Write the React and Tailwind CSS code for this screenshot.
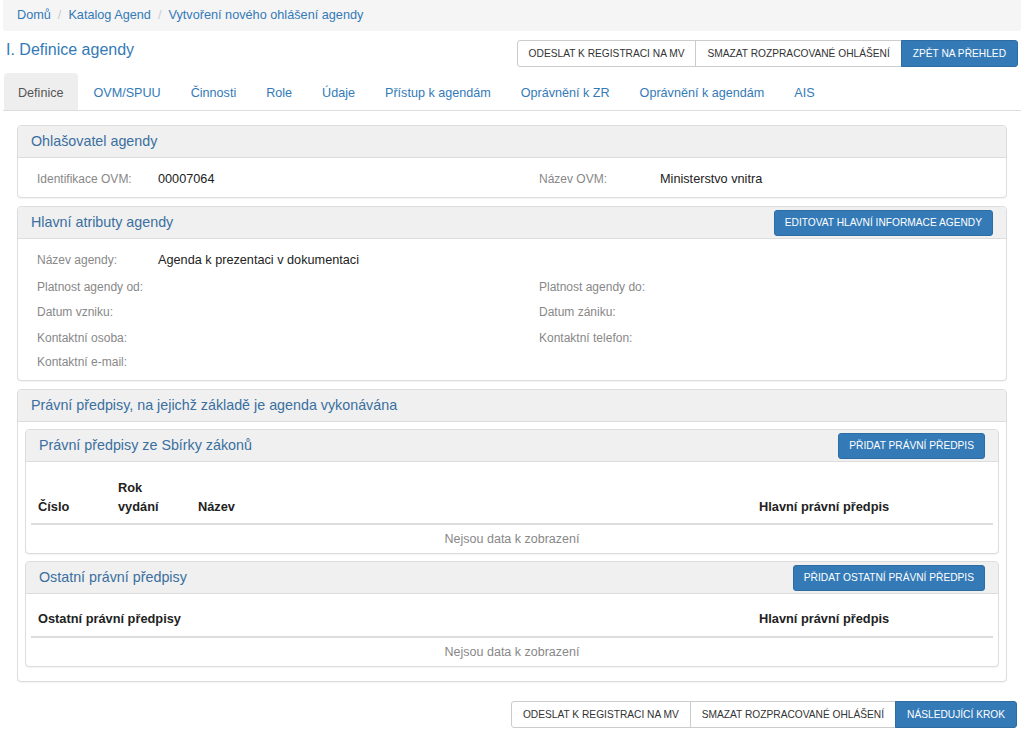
const LINK = 'text-[#337ab7]';

function Btn({ children, primary }) {
  return (
    <button
      className={
        primary
          ? 'h-[26px] px-[10px] text-[10.2px] uppercase border border-[#2e6da4] bg-[#337ab7] text-white rounded-[3px] whitespace-nowrap'
          : 'h-[26px] px-[10px] text-[10.2px] uppercase border border-[#ccc] bg-white text-[#333] rounded-[3px] whitespace-nowrap'
      }
    >
      {children}
    </button>
  );
}

function BtnGroup({ items }) {
  return (
    <div className="flex">
      {items.map((it, i) => (
        <button
          key={i}
          className={
            (it.primary
              ? 'border-[#2e6da4] bg-[#337ab7] text-white '
              : 'border-[#ccc] bg-white text-[#333] ') +
            'h-[27px] px-[11px] text-[10.2px] border whitespace-nowrap ' +
            (i === 0 ? 'rounded-l-[3px] ' : '-ml-px ') +
            (i === items.length - 1 ? 'rounded-r-[3px]' : '')
          }
        >
          {it.label}
        </button>
      ))}
    </div>
  );
}

function Panel({ title, action, children }) {
  return (
    <div className="border border-[#ddd] rounded-[4px] bg-white shadow-[0_1px_1px_rgba(0,0,0,0.05)]">
      <div className="h-[32px] bg-[#f0f0f0] border-b border-[#ddd] rounded-t-[4px] flex items-center justify-between pl-[13px] pr-[13px]">
        <span className="text-[14.3px] text-[#3a6f9f]">{title}</span>
        {action}
      </div>
      {children}
    </div>
  );
}

function Field({ label, value }) {
  return (
    <div className="flex items-baseline">
      <span className="w-[121px] text-[12px] text-[#888]">{label}</span>
      <span className="text-[12.7px] text-[#222]">{value}</span>
    </div>
  );
}

const tabs = [
  'Definice',
  'OVM/SPUU',
  'Činnosti',
  'Role',
  'Údaje',
  'Přístup k agendám',
  'Oprávnění k ZR',
  'Oprávnění k agendám',
  'AIS',
];

export default function App() {
  return (
    <div className="w-[1024px] min-h-[731px] bg-white px-[3px] font-['Liberation_Sans',Arial,sans-serif] text-[#333]">
      {/* breadcrumb */}
      <div className="h-[31px] bg-[#f5f5f5] flex items-center pl-[14px] text-[12.7px] rounded-b-[3px]">
        <span className={LINK}>Domů</span>
        <span className="mx-[7px] text-[#ccc]">/</span>
        <span className={LINK}>Katalog Agend</span>
        <span className="mx-[7px] text-[#ccc]">/</span>
        <span className={LINK}>Vytvoření nového ohlášení agendy</span>
      </div>

      {/* title row */}
      <div className="h-[42px] flex items-start justify-between">
        <h1 className="mt-[9px] ml-[3px] text-[16px] leading-[20px] text-[#337ab7]">I. Definice agendy</h1>
        <div className="mt-[9px] mr-[3px]">
          <BtnGroup
            items={[
              { label: 'ODESLAT K REGISTRACI NA MV' },
              { label: 'SMAZAT ROZPRACOVANÉ OHLÁŠENÍ' },
              { label: 'ZPĚT NA PŘEHLED', primary: true },
            ]}
          />
        </div>
      </div>

      {/* tabs */}
      <div className="flex h-[38px] border-b border-[#ddd] pl-px">
        {tabs.map((t, i) => (
          <div
            key={t}
            className={
              'h-[37px] flex items-center pt-[3px] px-[14px] mr-[2px] text-[12.6px] rounded-t-[4px] ' +
              (i === 0 ? 'bg-[#eee] text-[#555]' : LINK)
            }
          >
            {t}
          </div>
        ))}
      </div>

      <div className="mx-[14px] mt-[14px] flex flex-col gap-[8px]">
        {/* Ohlasovatel */}
        <Panel title="Ohlašovatel agendy">
          <div className="h-[39px] flex items-center pt-[5px] px-[19px]">
            <div className="w-[502px]">
              <Field label="Identifikace OVM:" value="00007064" />
            </div>
            <Field label="Název OVM:" value="Ministerstvo vnitra" />
          </div>
        </Panel>

        {/* Hlavni atributy */}
        <Panel
          title="Hlavní atributy agendy"
          action={<Btn primary>EDITOVAT HLAVNÍ INFORMACE AGENDY</Btn>}
        >
          <div className="pt-[8px] pb-[6px] px-[19px]">
            <div className="h-[27px] flex items-center">
              <Field label="Název agendy:" value="Agenda k prezentaci v dokumentaci" />
            </div>
            <div className="h-[25px] flex items-center">
              <div className="w-[502px]"><Field label="Platnost agendy od:" value="" /></div>
              <Field label="Platnost agendy do:" value="" />
            </div>
            <div className="h-[26px] flex items-center">
              <div className="w-[502px]"><Field label="Datum vzniku:" value="" /></div>
              <Field label="Datum zániku:" value="" />
            </div>
            <div className="h-[25px] flex items-center">
              <div className="w-[502px]"><Field label="Kontaktní osoba:" value="" /></div>
              <Field label="Kontaktní telefon:" value="" />
            </div>
            <div className="h-[24px] flex items-center">
              <Field label="Kontaktní e-mail:" value="" />
            </div>
          </div>
        </Panel>

        {/* Pravni predpisy */}
        <Panel title="Právní předpisy, na jejichž základě je agenda vykonávána">
          <div className="px-[7px] pt-[7px] pb-[14px] flex flex-col gap-[7px]">
            <Panel
              title="Právní předpisy ze Sbírky zákonů"
              action={<Btn primary>PŘIDAT PRÁVNÍ PŘEDPIS</Btn>}
            >
              <div className="px-[5px]">
                <div className="flex items-end h-[63px] pb-[7px] border-b-2 border-[#ddd] text-[12.8px] font-bold text-[#222] leading-[19px]">
                  <div className="w-[80px] pl-[7px]">Číslo</div>
                  <div className="w-[80px] pl-[7px]">Rok<br />vydání</div>
                  <div className="w-[561px] pl-[7px]">Název</div>
                  <div className="pl-[7px]">Hlavní právní předpis</div>
                </div>
                <div className="h-[28px] flex items-center justify-center text-[12.5px] text-[#888]">
                  Nejsou data k zobrazení
                </div>
              </div>
            </Panel>

            <Panel
              title="Ostatní právní předpisy"
              action={<Btn primary>PŘIDAT OSTATNÍ PRÁVNÍ PŘEDPIS</Btn>}
            >
              <div className="px-[5px]">
                <div className="flex items-end h-[44px] pb-[8px] border-b-2 border-[#ddd] text-[12.8px] font-bold text-[#222] leading-[19px]">
                  <div className="w-[721px] pl-[7px]">Ostatní právní předpisy</div>
                  <div className="pl-[7px]">Hlavní právní předpis</div>
                </div>
                <div className="h-[28px] flex items-center justify-center text-[12.5px] text-[#888]">
                  Nejsou data k zobrazení
                </div>
              </div>
            </Panel>
          </div>
        </Panel>
      </div>

      {/* bottom buttons */}
      <div className="flex justify-end mt-[19px] mr-[4px] pb-[4px]">
        <BtnGroup
          items={[
            { label: 'ODESLAT K REGISTRACI NA MV' },
            { label: 'SMAZAT ROZPRACOVANÉ OHLÁŠENÍ' },
            { label: 'NÁSLEDUJÍCÍ KROK', primary: true },
          ]}
        />
      </div>
    </div>
  );
}
